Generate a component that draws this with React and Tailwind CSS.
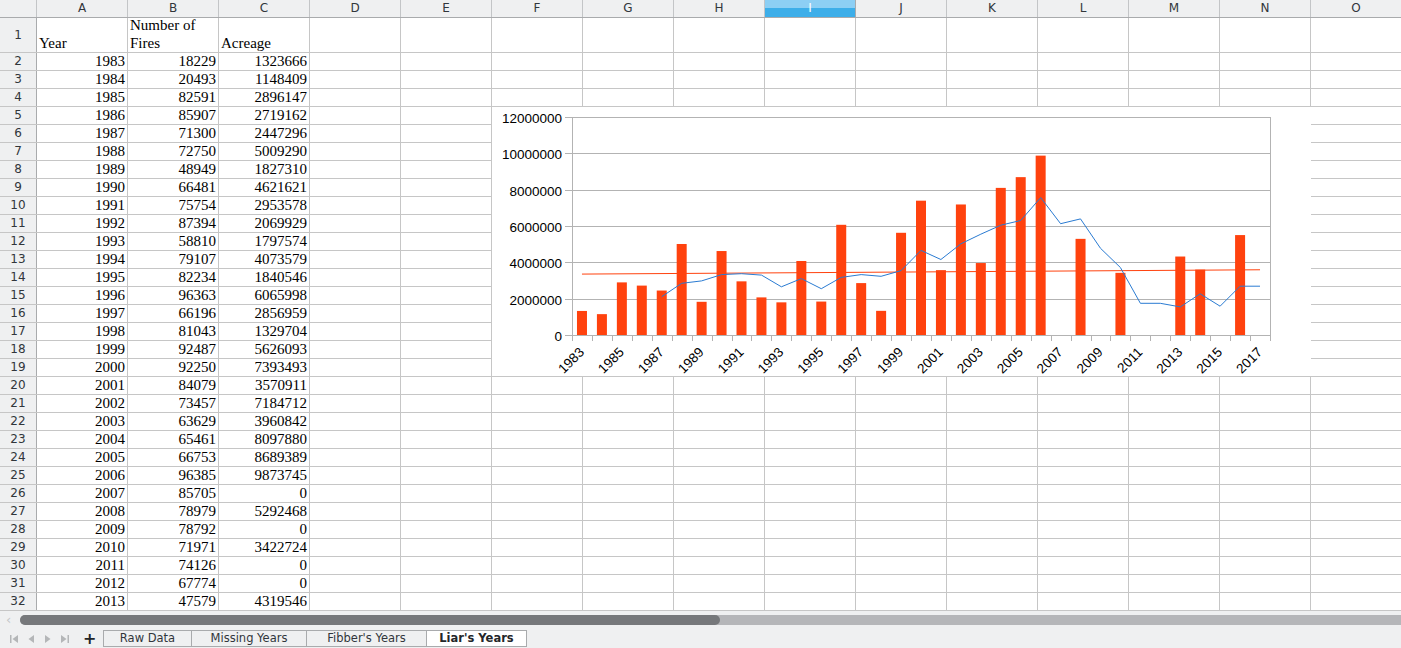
import React from 'react';

const cols = ['A', 'B', 'C', 'D', 'E', 'F', 'G', 'H', 'I', 'J', 'K', 'L', 'M', 'N', 'O'];

const rows = [
  [1983, 18229, 1323666],
  [1984, 20493, 1148409],
  [1985, 82591, 2896147],
  [1986, 85907, 2719162],
  [1987, 71300, 2447296],
  [1988, 72750, 5009290],
  [1989, 48949, 1827310],
  [1990, 66481, 4621621],
  [1991, 75754, 2953578],
  [1992, 87394, 2069929],
  [1993, 58810, 1797574],
  [1994, 79107, 4073579],
  [1995, 82234, 1840546],
  [1996, 96363, 6065998],
  [1997, 66196, 2856959],
  [1998, 81043, 1329704],
  [1999, 92487, 5626093],
  [2000, 92250, 7393493],
  [2001, 84079, 3570911],
  [2002, 73457, 7184712],
  [2003, 63629, 3960842],
  [2004, 65461, 8097880],
  [2005, 66753, 8689389],
  [2006, 96385, 9873745],
  [2007, 85705, 0],
  [2008, 78979, 5292468],
  [2009, 78792, 0],
  [2010, 71971, 3422724],
  [2011, 74126, 0],
  [2012, 67774, 0],
  [2013, 47579, 4319546],
];

// the chart runs past the visible rows
const acreage = rows.map((r) => r[2]).concat([3600000, 0, 5500000, 0]);

const Chart = () => {
  const L = 80;
  const R = 778;
  const T = 10;
  const B = 228;
  const n = acreage.length;
  const step = (R - L) / n;
  const y = (v) => B - (v / 12000000) * (B - T);
  const cx = (i) => L + step * (i + 0.5);

  const avg = [];
  for (let i = 4; i < n; i++) {
    let s = 0;
    for (let j = i - 4; j <= i; j++) s += acreage[j];
    avg.push(`${cx(i).toFixed(1)},${y(s / 5).toFixed(1)}`);
  }

  const mx = (n - 1) / 2;
  const my = acreage.reduce((a, b) => a + b, 0) / n;
  let num = 0;
  let den = 0;
  acreage.forEach((v, i) => {
    num += (i - mx) * (v - my);
    den += (i - mx) * (i - mx);
  });
  const slope = num / den;
  const t0 = my - slope * mx;
  const t1 = my + slope * (n - 1 - mx);

  const grid = [0, 2, 4, 6, 8, 10, 12];

  return (
    <svg width="819" height="269" className="block" style={{ fontFamily: '"Liberation Sans", Arial, sans-serif' }}>
      {grid.map((g) => {
        const gy = Math.round(y(g * 1000000)) + 0.5;
        return (
          <g key={g}>
            <line x1={L - 7} x2={R} y1={gy} y2={gy} stroke="#b3b3b3" strokeWidth="1" />
            <text x={L - 10} y={gy + 5} textAnchor="end" fontSize="13.5" fill="#000">
              {g * 1000000}
            </text>
          </g>
        );
      })}
      <line x1={L + 0.5} x2={L + 0.5} y1={T} y2={B + 1} stroke="#b3b3b3" />
      <line x1={R + 0.5} x2={R + 0.5} y1={T} y2={B + 1} stroke="#b3b3b3" />
      {Array.from({ length: n + 1 }, (_, k) => {
        const tx = Math.round(L + step * k) + 0.5;
        return <line key={k} x1={tx} x2={tx} y1={B} y2={B + 6} stroke="#b3b3b3" />;
      })}
      {acreage.map((v, i) =>
        v > 0 ? (
          <rect key={i} x={cx(i) - 5} y={y(v)} width="10" height={B - y(v)} fill="#ff420e" />
        ) : null
      )}
      <line x1={cx(0)} x2={cx(n - 1)} y1={y(t0)} y2={y(t1)} stroke="#ff420e" strokeWidth="1" />
      <polyline points={avg.join(' ')} fill="none" stroke="#2a7bd2" strokeWidth="1" />
      {acreage.map((_, i) =>
        i % 2 === 0 ? (
          <text
            key={i}
            x={cx(i) + 3}
            y={B + 18}
            textAnchor="end"
            fontSize="13.5"
            fill="#000"
            transform={`rotate(-45 ${cx(i) + 3} ${B + 18})`}
          >
            {1983 + i}
          </text>
        ) : null
      )}
    </svg>
  );
};

const NavIcon = ({ d }) => (
  <svg width="10" height="10" viewBox="0 0 10 10" className="block">
    <path d={d} fill="#b4b6b8" />
  </svg>
);

const App = () => {
  return (
    <div className="w-[1401px] h-[648px] overflow-hidden bg-[#eff0f1] text-[#31363b]" style={{ fontFamily: '"DejaVu Sans", sans-serif' }}>
      <div className="relative bg-white">
        <div className="flex h-[18px] bg-[#eff0f1] border-b border-[#a9abad] text-[12px]">
          <div className="w-[37px] shrink-0 border-r border-[#c3c5c7]" />
          {cols.map((c) =>
            c === 'I' ? (
              <div key={c} className="w-[91px] shrink-0 border-r border-[#a9abad] bg-[linear-gradient(to_bottom,#8dcff4_45%,#3daee9_45%)] text-white text-center leading-[17px]">
                {c}
              </div>
            ) : (
              <div key={c} className="w-[91px] shrink-0 border-r border-[#c3c5c7] text-center leading-[17px]">
                {c}
              </div>
            )
          )}
        </div>

        <div className="flex h-[35px] border-b border-[#c6c6c6]" style={{ fontFamily: '"Liberation Serif", serif' }}>
          <div className="w-[37px] shrink-0 border-r border-[#a9abad] bg-[#eff0f1] flex items-center justify-center text-[12px] text-[#31363b]" style={{ fontFamily: '"DejaVu Sans", sans-serif' }}>
            1
          </div>
          <div className="w-[91px] shrink-0 border-r border-[#c6c6c6] flex items-end pl-[2px] text-[15px] leading-[18px] text-black">Year</div>
          <div className="w-[91px] shrink-0 border-r border-[#c6c6c6] flex items-end pl-[2px] text-[15px] leading-[18px] text-black">Number of Fires</div>
          <div className="w-[91px] shrink-0 border-r border-[#c6c6c6] flex items-end pl-[2px] text-[15px] leading-[18px] text-black">Acreage</div>
          {cols.slice(3).map((c) => (
            <div key={c} className="w-[91px] shrink-0 border-r border-[#c6c6c6]" />
          ))}
        </div>

        {rows.map((r, i) => (
          <div key={r[0]} className="flex h-[18px] border-b border-[#c6c6c6]">
            <div className="w-[37px] shrink-0 border-r border-[#a9abad] bg-[#eff0f1] text-center text-[12px] leading-[17px]">
              {i + 2}
            </div>
            {r.map((v, j) => (
              <div key={j} className="w-[91px] shrink-0 border-r border-[#c6c6c6] text-right pr-[2px] text-[15px] leading-[17px] text-black" style={{ fontFamily: '"Liberation Serif", serif' }}>
                {v}
              </div>
            ))}
            {cols.slice(3).map((c) => (
              <div key={c} className="w-[91px] shrink-0 border-r border-[#c6c6c6]" />
            ))}
          </div>
        ))}

        <div className="absolute left-[492px] top-[107px] w-[819px] h-[269px] bg-white">
          <Chart />
        </div>
      </div>

      <div className="flex items-center h-[17px] pl-[6px]">
        <span className="w-[14px] text-[13px] leading-none text-[#c4c6c8]">&lsaquo;</span>
        <div className="flex-1 h-[10px] rounded-l-full bg-[#b5b6b9]">
          <div className="w-[700px] h-full rounded-full bg-[#76787b]" />
        </div>
      </div>

      <div className="flex items-start h-[20px] text-[11.5px]">
        <div className="w-[103px] shrink-0 flex items-center h-[17px] mt-[2px] pl-[9px] gap-[7px]">
          <NavIcon d="M1 1h1.5v8H1zM9 1v8L3.5 5z" />
          <NavIcon d="M8 1v8L2.5 5z" />
          <NavIcon d="M2 1v8l5.5-4z" />
          <NavIcon d="M1 1v8l5.5-4zM7.5 1H9v8H7.5z" />
          <span className="ml-[6px] text-[16px] font-bold leading-none text-[#232629]">+</span>
        </div>
        <div className="w-[89px] h-[17px] mt-[2px] border border-[#a9abad] text-center leading-[15px]">Raw Data</div>
        <div className="w-[115px] h-[17px] mt-[2px] border-y border-r border-[#a9abad] text-center leading-[15px]">Missing Years</div>
        <div className="w-[120px] h-[17px] mt-[2px] border-y border-r border-[#a9abad] text-center leading-[15px]">Fibber's Years</div>
        <div className="w-[100px] h-[17px] mt-[2px] border-y border-r border-[#a9abad] bg-white font-bold text-center leading-[15px] text-[#232629]">Liar's Years</div>
      </div>
    </div>
  );
};

export default App;
